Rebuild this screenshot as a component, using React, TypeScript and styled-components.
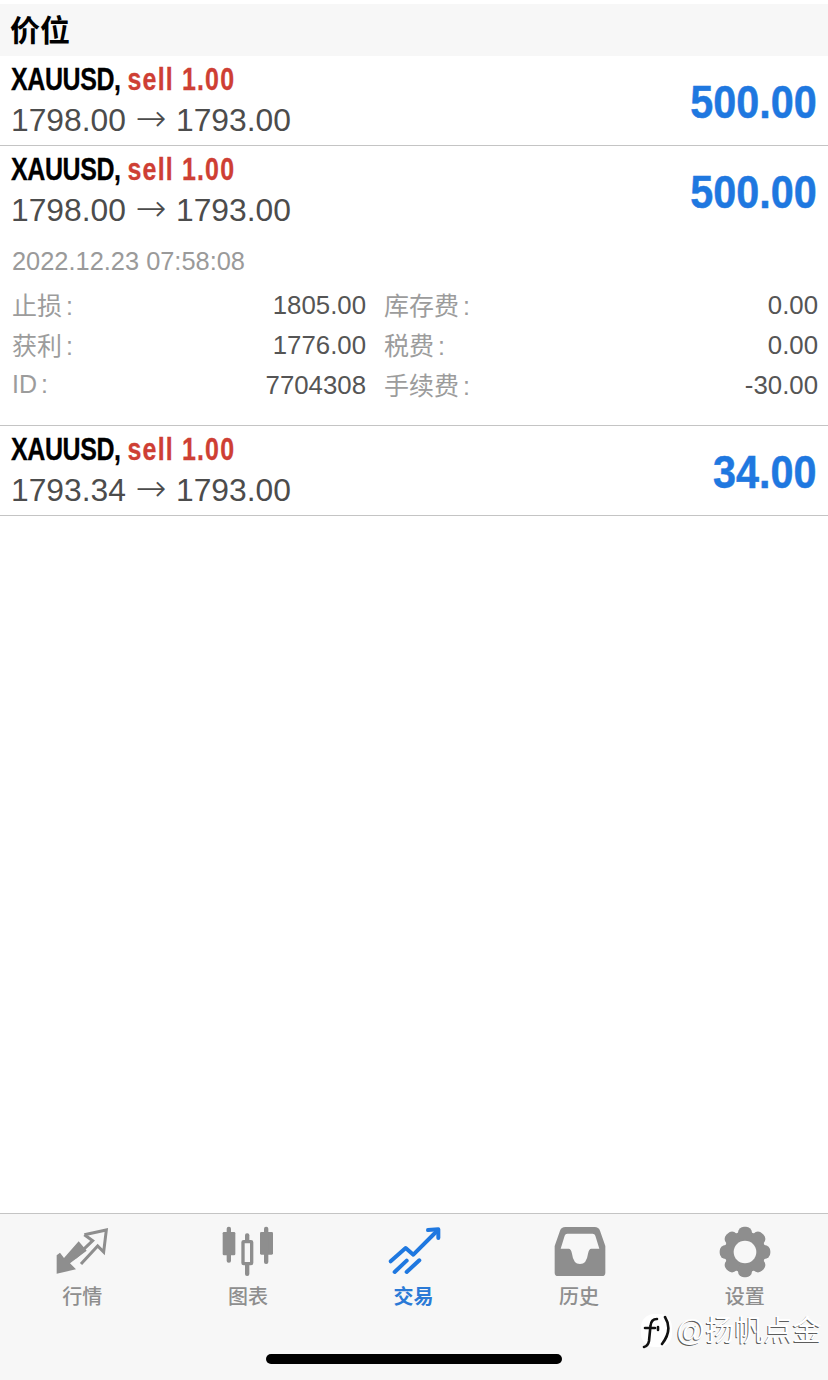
import React from "react";
import styled, { createGlobalStyle } from "styled-components";

const GlobalStyle = createGlobalStyle`
  html, body {
    margin: 0;
    padding: 0;
    background: #fff;
  }
  * {
    box-sizing: border-box;
  }
`;

const SANS = `"Liberation Sans", "Noto Sans CJK SC", sans-serif`;

const Page = styled.div`
  width: 828px;
  height: 1380px;
  position: relative;
  display: flex;
  flex-direction: column;
  padding-top: 4px;
  overflow: hidden;
  background: #fff;
  font-family: ${SANS};
`;
const SectionHeader = styled.div`
  height: 52px;
  line-height: 54px;
  padding-left: 10px;
  background: #f7f7f7;
  color: #000;
  font-size: 30px;
  font-weight: 700;
`;
const List = styled.div`
  flex: 1;
`;
const Row = styled.div<{ $open?: boolean }>`
  border-bottom: 1px solid #c4c4c4;
  padding-bottom: ${(p) => (p.$open ? "21px" : "5px")};
`;
const Summary = styled.div`
  display: flex;
  justify-content: space-between;
  align-items: center;
  padding: 3px 11px 0;
`;
const Title = styled.div`
  font-size: 32px;
  line-height: 40px;
  font-weight: 700;
  color: #000;
  white-space: nowrap;
  -webkit-text-stroke: 0.3px currentColor;
  transform: scaleX(0.78);
  transform-origin: left center;
`;
const Symbol = styled.span`
  letter-spacing: -0.5px;
`;
const Side = styled.span`
  color: #ce3f34;
  letter-spacing: 1.5px;
`;
const Prices = styled.div`
  font-size: 31.8px;
  line-height: 41px;
  padding-top: 1px;
  margin-bottom: -1px;
  color: #4c4c4c;
  white-space: nowrap;
`;
const Arrow = styled.span`
  display: inline-block;
  width: 50px;
  text-align: center;
  font-family: "DejaVu Sans", sans-serif;
  font-size: 37px;
  font-weight: 200;
  line-height: 30px;
`;
const Profit = styled.div`
  font-size: 47px;
  font-weight: 700;
  line-height: 50px;
  color: #1f78e0;
  margin-top: 4px;
  -webkit-text-stroke: 0.5px currentColor;
  transform: scaleX(0.88);
  transform-origin: right center;
`;
const Details = styled.div`
  padding: 10px 10px 0 13px;
`;
const DateLine = styled.div`
  font-size: 25.4px;
  line-height: 40px;
  color: #9a9a9a;
  margin: 1px 0 3px -1px;
`;
const FieldGrid = styled.div`
  display: grid;
  grid-template-columns: 353px 433px;
  column-gap: 19px;
  grid-auto-rows: 40px;
`;
const Field = styled.div`
  display: flex;
  justify-content: space-between;
  align-items: center;
  font-size: 25.8px;
`;
const FieldLabel = styled.span`
  margin-left: -1px;
  font-size: 25px;
  color: #9c9c9c;
`;
const Colon = styled.span`
  margin-left: 4px;
`;
const FieldValue = styled.span`
  margin-top: 2px;
  color: #555;
`;
const TabBar = styled.nav`
  height: 167px;
  display: grid;
  grid-template-columns: repeat(5, 1fr);
  align-items: start;
  padding-top: 12px;
  background: #f7f7f7;
  border-top: 1px solid #c4c4c4;
`;
const Tab = styled.div`
  display: flex;
  flex-direction: column;
  align-items: center;
`;
const TabIcon = styled.svg<{ $active?: boolean }>`
  display: block;
  width: 56px;
  height: 52px;
  color: ${(p) => (p.$active ? "#1f78e0" : "#8e8e8e")};
`;
const TabLabel = styled.span<{ $active?: boolean }>`
  margin: 5px 1px 0 0;
  font-size: 20px;
  line-height: 28px;
  font-weight: ${(p) => (p.$active ? 700 : 500)};
  color: ${(p) => (p.$active ? "#2b7ad6" : "#8e8e8e")};
`;
const HomeIndicator = styled.div`
  position: absolute;
  left: 266px;
  bottom: 16px;
  width: 296px;
  height: 10px;
  border-radius: 5px;
  background: #000;
`;
const Watermark = styled.div`
  position: absolute;
  left: 640px;
  top: 1313px;
  display: flex;
  align-items: center;
  gap: 2px;
  font-size: 29px;
  line-height: 36px;
  color: #fff;
  text-shadow: -1px 1px 0 rgba(0, 0, 0, 0.65);
`;
const WatermarkLogo = styled.svg`
  display: block;
  width: 34px;
  height: 36px;
`;

const trades = [
  { id: 1, from: "1798.00", to: "1793.00", profit: "500.00" },
  {
    id: 2,
    from: "1798.00",
    to: "1793.00",
    profit: "500.00",
    open: true,
  },
  { id: 3, from: "1793.34", to: "1793.00", profit: "34.00" },
];

const fields = [
  ["止损", "1805.00"],
  ["库存费", "0.00"],
  ["获利", "1776.00"],
  ["税费", "0.00"],
  ["ID", "7704308"],
  ["手续费", "-30.00"],
];

function QuotesIcon() {
  return (
    <TabIcon viewBox="75 62 168 156">
      <path
        fill="currentColor"
        d="M80 150 L80 205 L138 192 L120 174 L170 136 L146 108 L102 158 L90 142 Z"
      />
      <path
        fill="none"
        stroke="currentColor"
        strokeWidth="9"
        d="M163 88 L229 74 L221 140 L203 122 L153 176 M136 156 L188 106 L163 88"
      />
    </TabIcon>
  );
}

function ChartIcon() {
  return (
    <TabIcon viewBox="572 62 168 156">
      <g fill="currentColor">
        <rect x="580" y="80" width="38" height="70" rx="4" />
        <rect x="592" y="64" width="13" height="108" rx="6" />
        <rect x="692" y="80" width="39" height="68" rx="4" />
        <rect x="704" y="64" width="13" height="112" rx="6" />
        <rect x="647" y="84" width="13" height="128" rx="6" />
      </g>
      <rect x="641" y="109" width="26" height="66" rx="2" fill="#f7f7f7" stroke="currentColor" strokeWidth="10" />
    </TabIcon>
  );
}

function TradeIcon() {
  return (
    <TabIcon viewBox="46 62 168 156" $active>
      <g fill="none" stroke="currentColor" strokeWidth="12" strokeLinecap="round" strokeLinejoin="round">
        <path d="M60 168 L105 128 L128 148 L196 80" />
        <path d="M172 74 L203 72 L203 98" />
        <path d="M72 200 L108 166" />
        <path d="M108 200 L146 165" />
      </g>
    </TabIcon>
  );
}

function HistoryIcon() {
  return (
    <TabIcon viewBox="540 62 168 156">
      <path
        fill="currentColor"
        fillRule="evenodd"
        d="M580 65 L668 65 Q680 65 684 76 L700 122 L700 202 Q700 212 690 212 L558 212 Q548 212 548 202 L548 122 L564 76 Q568 65 580 65 Z M586 85 Q580 85 578 91 L566 130 L590 130 Q597 130 600 145 Q604 176 624 176 Q644 176 648 145 Q651 130 658 130 L682 130 L670 91 Q668 85 662 85 Z"
      />
    </TabIcon>
  );
}

function SettingsIcon() {
  const teeth = [0, 45, 90, 135, 180, 225, 270, 315];
  return (
    <TabIcon viewBox="-84 -78 168 156">
      <circle r="62" fill="currentColor" />
      {teeth.map((angle) => (
        <rect
          key={angle}
          x="-21"
          y="-76"
          width="42"
          height="40"
          rx="18"
          fill="currentColor"
          transform={`rotate(${angle})`}
        />
      ))}
      <circle r="34" fill="#f7f7f7" />
    </TabIcon>
  );
}

const tabs = [
  { label: "行情", icon: <QuotesIcon /> },
  { label: "图表", icon: <ChartIcon /> },
  { label: "交易", icon: <TradeIcon />, active: true },
  { label: "历史", icon: <HistoryIcon /> },
  { label: "设置", icon: <SettingsIcon /> },
];

export default function App() {
  return (
    <Page>
      <GlobalStyle />
      <SectionHeader>价位</SectionHeader>
      <List>
        {trades.map((trade) => (
          <Row key={trade.id} $open={trade.open}>
            <Summary>
              <div>
                <Title>
                  <Symbol>XAUUSD,</Symbol> <Side>sell 1.00</Side>
                </Title>
                <Prices>
                  {trade.from}
                  <Arrow>→</Arrow>
                  {trade.to}
                </Prices>
              </div>
              <Profit>{trade.profit}</Profit>
            </Summary>
            {trade.open && (
              <Details>
                <DateLine>2022.12.23 07:58:08</DateLine>
                <FieldGrid>
                  {fields.map(([label, value]) => (
                    <Field key={label}>
                      <FieldLabel>
                        {label}
                        <Colon>:</Colon>
                      </FieldLabel>
                      <FieldValue>{value}</FieldValue>
                    </Field>
                  ))}
                </FieldGrid>
              </Details>
            )}
          </Row>
        ))}
      </List>
      <TabBar>
        {tabs.map((tab) => (
          <Tab key={tab.label}>
            {tab.icon}
            <TabLabel $active={tab.active}>{tab.label}</TabLabel>
          </Tab>
        ))}
      </TabBar>
      <HomeIndicator />
      <Watermark>
        <WatermarkLogo viewBox="0 0 34 36">
          <rect x="1" y="1" width="31" height="33" rx="13" fill="#fff" />
          <path
            fill="none"
            stroke="#111"
            strokeWidth="2.6"
            strokeLinecap="round"
            d="M17 6 Q11 6 10.5 13 L9 28 Q8 33 4 34 M5 15 L15 15 M25 4 Q33 17 22 31 M18 14 L18 17"
          />
        </WatermarkLogo>
        @扬帆点金
      </Watermark>
    </Page>
  );
}
